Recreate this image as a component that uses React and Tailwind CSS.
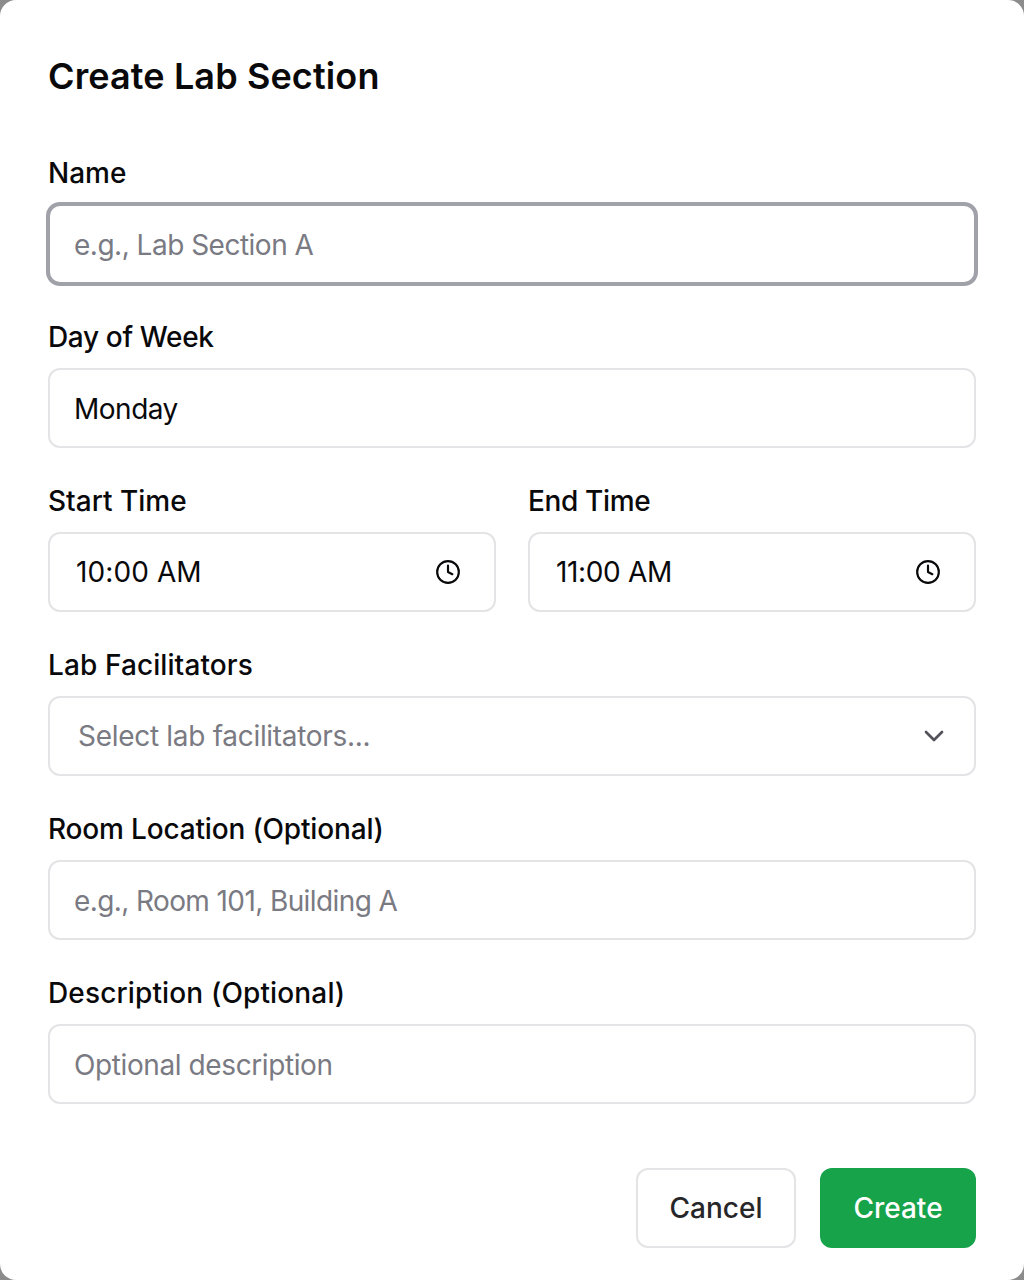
import { Clock, ChevronDown } from 'lucide-react';

const INPUT = 'w-full h-20 rounded-xl border-2 border-[#e4e4e7] bg-white px-6 pt-0.5 text-[28px] text-[#09090b] placeholder:text-[#7a7a83] outline-none';

const Label = ({ children, className = '' }) => (
  <label className={`mb-3 block h-10 pt-px text-[28px] leading-10 font-medium text-[#09090b] ${className}`}>{children}</label>
);

const TimeField = ({ label, value, labelClass, valueClass }) => (
  <div>
    <Label className={labelClass}>{label}</Label>
    <div className="flex h-20 items-center justify-between rounded-xl border-2 border-[#e4e4e7] bg-white pl-[26px] pr-[33px]">
      <span className={`text-[28px] text-[#09090b] ${valueClass}`}>{value}</span>
      <Clock size={26} strokeWidth={2} className="text-[#09090b]" />
    </div>
  </div>
);

export default function App() {
  return (
    <div className="h-[1280px] w-[1024px] bg-[#8c8c8c] font-['Inter',sans-serif]">
      <div className="h-[1280px] rounded-2xl bg-white px-12 pt-12">
        <h2 className="mb-12 h-14 text-4xl leading-[56px] font-semibold tracking-[0.12px] text-[#09090b]">Create Lab Section</h2>

        <div className="flex flex-col gap-8">
          <div>
            <Label>Name</Label>
            <input
              placeholder="e.g., Lab Section A"
              className="h-20 w-full rounded-xl border-2 border-[#a1a1aa] bg-white px-6 pt-0.5 text-[28px] tracking-[-0.5px] text-[#09090b] shadow-[0_0_0_2px_#a1a1aa] outline-none placeholder:text-[#7a7a83]"
            />
          </div>

          <div>
            <Label className="tracking-[-0.35px]">Day of Week</Label>
            <input readOnly value="Monday" className={`${INPUT} tracking-[-0.5px]`} />
          </div>

          <div className="grid grid-cols-2 gap-8">
            <TimeField label="Start Time" value="10:00 AM" valueClass="tracking-[0.1px]" />
            <TimeField label="End Time" value="11:00 AM" labelClass="tracking-[-0.35px]" valueClass="tracking-[-0.35px]" />
          </div>

          <div>
            <Label className="tracking-[0.1px]">Lab Facilitators</Label>
            <div className="flex h-20 items-center justify-between rounded-xl border-2 border-[#e4e4e7] bg-white pl-7 pr-6">
              <span className="text-[28px] tracking-[-0.3px] text-[#7a7a83]">Select lab facilitators...</span>
              <ChevronDown size={32} strokeWidth={2} className="text-[#52525b]" />
            </div>
          </div>

          <div>
            <Label className="tracking-[-0.17px]">Room Location (Optional)</Label>
            <input placeholder="e.g., Room 101, Building A" className={`${INPUT} tracking-[-0.6px]`} />
          </div>

          <div>
            <Label className="tracking-[0.14px]">Description (Optional)</Label>
            <input placeholder="Optional description" className={`${INPUT} tracking-[-0.4px]`} />
          </div>
        </div>

        <div className="mt-16 flex justify-end gap-6">
          <button className="h-20 w-40 rounded-xl border-2 border-[#e4e4e7] bg-white text-[28px] font-medium text-[#27272a]">Cancel</button>
          <button className="h-20 w-[156px] rounded-xl bg-[#16a34a] text-[28px] font-medium text-white">Create</button>
        </div>
      </div>
    </div>
  );
}
